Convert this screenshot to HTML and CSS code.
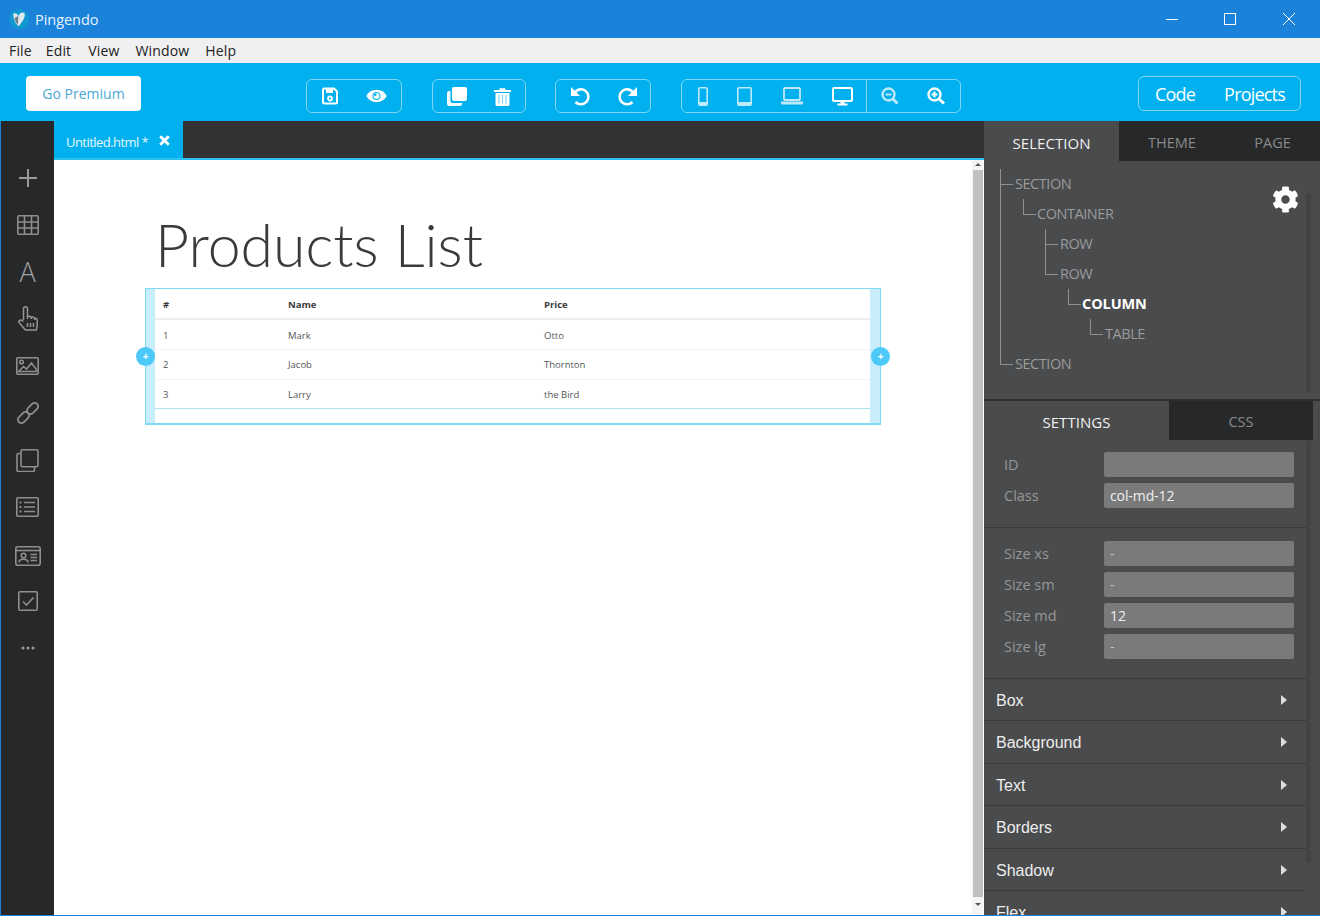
FILE: index.html
```html
<!DOCTYPE html>
<html lang="en">
<head>
<meta charset="utf-8">
<title>Pingendo</title>
<link rel="stylesheet" href="styles.css">
</head>
<body>
<div class="app">
  <header class="titlebar">
    <div class="brand">
      <svg class="logo" width="22" height="22" viewBox="0 0 22 22"><circle cx="11" cy="11" r="10" fill="#1098d0"/><path d="M5.500 5.500c2 -1 4 .5 5 2.500c.8 -2.500 3.500 -4.500 6 -3c1 3 -1 7 -3 9.500c-1 1.500 -2 3 -3 3.500c-2 -1 -3.500 -4 -4.500 -7c-.5 -2 -.8 -4 -.5 -5.500z" fill="#dfe9ee"/><path d="M10.500 8c-.5 3 -.5 6 -.5 9c-1.500 -1.500 -3 -4 -3.500 -7z" fill="#6d7f8c"/></svg>
      <span>Pingendo</span>
    </div>
    <div class="winctl">
      <svg class="winbtn" width="12" height="12" viewBox="0 0 12 12"><path d="M0 6.500h12" stroke="#fff" fill="none"/></svg>
      <svg class="winbtn" width="12" height="12" viewBox="0 0 12 12"><rect x=".5" y=".5" width="11" height="11" stroke="#fff" fill="none"/></svg>
      <svg class="winbtn winclose" width="12" height="12" viewBox="0 0 12 12"><path d="M0 0l12 12M12 0L0 12" stroke="#fff" fill="none"/></svg>
    </div>
  </header>

  <nav class="menubar">
    <span class="m-file">File</span><span class="m-edit">Edit</span><span class="m-view">View</span><span class="m-window">Window</span><span class="m-help">Help</span>
  </nav>

  <div class="toolbar">
    <button class="premium">Go Premium</button>
    <div class="tgroup g1">
      <svg class="ti i-save" width="16" height="18" viewBox="0 0 16 18"><path d="M2 1.500h10l3 3V15a1.500 1.500 0 0 1-1.500 1.500h-11A1.500 1.500 0 0 1 1 15V3a1.500 1.500 0 0 1 1-1.500z" fill="none" stroke="#fff" stroke-width="2"/><path d="M4 2h7v4H4z" fill="#fff"/><circle cx="8" cy="11.500" r="2" fill="none" stroke="#fff" stroke-width="1.800"/></svg>
      <svg class="ti i-eye" width="21" height="14" viewBox="0 0 21 14"><path d="M.3 7C2.500 3 6 .8 10.500.8S18.500 3 20.700 7c-2.200 4-5.700 6.200-10.200 6.200S2.500 11 .3 7z" fill="#fff"/><circle cx="10.500" cy="7" r="4" fill="#00b0ef"/><circle cx="10.500" cy="7" r="3" fill="#fff"/><circle cx="9.300" cy="5.800" r="1.300" fill="#00b0ef"/></svg>
    </div>
    <div class="tgroup g2">
      <svg class="ti i-copy" width="20" height="19" viewBox="0 0 20 19"><rect x="5" y="0" width="15" height="14" rx="2" fill="#fff"/><path d="M3.500 4v10a2 2 0 0 0 2 2H15v1a2 2 0 0 1-2 2H2a2 2 0 0 1-2-2V6a2 2 0 0 1 2-2z" fill="#fff" opacity=".95"/></svg>
      <svg class="ti i-trash" width="17" height="19" viewBox="0 0 17 19"><path d="M0 3h17v2H0zM5.500 1.200h6V3h-6z" fill="#fff"/><path d="M1.500 6h14v11.500a1.500 1.500 0 0 1-1.500 1.500H3a1.500 1.500 0 0 1-1.500-1.500z" fill="#fff"/><path d="M5 8v8.500M8.500 8v8.500M12 8v8.500" stroke="#7fd6f5" stroke-width="1.200"/></svg>
    </div>
    <div class="tgroup g3">
      <svg class="ti i-undo" width="19" height="19" viewBox="0 0 19 19"><path d="M4 5.200A7.500 7.500 0 1 1 4.500 15" fill="none" stroke="#fff" stroke-width="2.600"/><path d="M0 0v9h9z" fill="#fff"/></svg>
      <svg class="ti i-redo" width="19" height="19" viewBox="0 0 19 19"><path d="M15 5.200A7.500 7.500 0 1 0 14.500 15" fill="none" stroke="#fff" stroke-width="2.600"/><path d="M19 0v9h-9z" fill="#fff"/></svg>
    </div>
    <div class="tgroup g4">
      <div class="devices">
        <svg class="ti dim i-phone" width="10" height="19" viewBox="0 0 10 19"><rect x=".8" y=".8" width="8.400" height="17.400" rx="1.200" fill="none" stroke="#bfeafb" stroke-width="1.600"/><path d="M1 15h8v3H1z" fill="#bfeafb"/></svg>
        <svg class="ti dim i-tablet" width="15" height="19" viewBox="0 0 15 19"><rect x=".8" y=".8" width="13.400" height="17.400" rx="1.200" fill="none" stroke="#bfeafb" stroke-width="1.600"/><path d="M1 15h13v3H1z" fill="#bfeafb"/></svg>
        <svg class="ti dim i-laptop" width="22" height="18" viewBox="0 0 22 18"><rect x="3" y="1" width="16" height="12" rx="1" fill="none" stroke="#bfeafb" stroke-width="1.800"/><path d="M0 14.500h22v1.500a1.500 1.500 0 0 1-1.500 1.500h-19A1.500 1.500 0 0 1 0 16z" fill="#bfeafb"/></svg>
        <svg class="ti i-desktop" width="21" height="19" viewBox="0 0 21 19"><rect x="1" y="1" width="19" height="13" rx="1" fill="none" stroke="#fff" stroke-width="2"/><path d="M8.500 14h4v3h-4zM5.500 16.500h10V18.500h-10z" fill="#fff"/></svg>
      </div>
      <div class="zooms">
        <svg class="ti dim i-zout" width="18" height="18" viewBox="0 0 18 18"><circle cx="7.500" cy="7.500" r="6" fill="none" stroke="#bfeafb" stroke-width="2.400"/><path d="M4.500 7.500h6" stroke="#bfeafb" stroke-width="2"/><path d="M11.500 11.500l5 5" stroke="#bfeafb" stroke-width="3"/></svg>
        <svg class="ti i-zin" width="19" height="18" viewBox="0 0 19 18"><circle cx="7.500" cy="7.500" r="6" fill="none" stroke="#fff" stroke-width="2.400"/><path d="M4.500 7.500h6M7.500 4.500v6" stroke="#fff" stroke-width="2"/><path d="M11.500 11.500l5.500 5" stroke="#fff" stroke-width="3"/></svg>
      </div>
    </div>
    <div class="codegroup"><span>Code</span><span>Projects</span></div>
  </div>

  <main class="workspace">
    <aside class="sidebar">
      <div class="sb"><svg width="18" height="18" viewBox="0 0 18 18"><path d="M9 0v18M0 9h18" stroke="#999" stroke-width="2" fill="none"/></svg></div>
      <div class="sb"><svg width="22" height="20" viewBox="0 0 22 20" fill="none" stroke="#8d8e8f" stroke-width="1.600"><rect x=".8" y=".8" width="20.400" height="18.400" rx="1"/><path d="M.8 7h20.400M.8 13h20.400M7.500.8v18.400M14.500.8v18.400"/></svg></div>
      <div class="sb sb-a">A</div>
      <div class="sb"><svg width="20" height="25" viewBox="0 0 20 25" fill="none" stroke="#959697" stroke-width="1.500" stroke-linejoin="round"><path d="M5.500 14V2.800a2 2 0 0 1 4 0V10.500c1.800-.6 3.300-.2 3.800.8 1.500-.5 2.900 0 3.300 1 1.400-.3 2.600.5 2.600 2V19c0 2-.5 3.200-1 5H7.500L1.200 16.800c-1.100-1.500.8-3.500 2.500-2.500L5.500 15.500"/><path d="M9.500 10.500V13M13.300 11.300V13M16.600 12.300V14M9.500 17v4M12.500 17v4M15.500 17v4"/></svg></div>
      <div class="sb"><svg width="23" height="18" viewBox="0 0 23 18" fill="none" stroke="#8d8e8f" stroke-width="1.600"><rect x=".8" y=".8" width="21.400" height="16.400" rx="1"/><circle cx="5.500" cy="5" r="1.800"/><path d="M2.500 14.500l5-5 3 2.500 5-6 5 6.500v2z"/></svg></div>
      <div class="sb"><svg width="24" height="24" viewBox="0 0 24 24" fill="none" stroke="#8d8e8f" stroke-width="1.800"><rect x="-6.500" y="-3.500" width="13" height="7" rx="3.500" transform="translate(7.500 16.500) rotate(-45)"/><rect x="-6.500" y="-3.500" width="13" height="7" rx="3.500" transform="translate(16.500 7.500) rotate(-45)"/></svg></div>
      <div class="sb sb-down"><svg width="23" height="23" viewBox="0 0 23 23" fill="none" stroke="#8d8e8f" stroke-width="1.600"><rect x="5" y=".8" width="17" height="17" rx="1.500"/><path d="M5 4.500H2.500A1.500 1.500 0 0 0 1 6v15a1.500 1.500 0 0 0 1.500 1.500H17a1.500 1.500 0 0 0 1.500-1.500v-3"/></svg></div>
      <div class="sb"><svg width="23" height="20" viewBox="0 0 23 20" fill="none" stroke="#8d8e8f" stroke-width="1.600"><rect x=".8" y=".8" width="21.400" height="18.400" rx="1"/><path d="M8 5.500h11M8 10h11M8 14.500h11"/><path d="M3.500 5.500h2M3.500 10h2M3.500 14.500h2" stroke-width="2.200"/></svg></div>
      <div class="sb sb-card"><svg width="26" height="20" viewBox="0 0 26 20" fill="none" stroke="#8d8e8f" stroke-width="1.600"><rect x=".8" y=".8" width="24.400" height="18.400" rx="2"/><path d="M.8 4.500h24.400"/><circle cx="8.500" cy="9.500" r="2.300"/><path d="M4 16.500c0-2.500 2-3.300 4.500-3.300s4.500.8 4.500 3.300M15.500 8.500h6.500M15.500 11.500h6.500M15.500 14.500h6.500"/></svg></div>
      <div class="sb sb-check"><svg width="20" height="20" viewBox="0 0 20 20" fill="none" stroke="#8d8e8f" stroke-width="1.600"><rect x=".8" y=".8" width="18.400" height="18.400" rx="1"/><path d="M5 10.500l3.500 3.500 7-7.500" stroke-width="1.600"/></svg></div>
      <div class="sb"><svg width="14" height="4" viewBox="0 0 14 4" fill="#9a9b9c"><circle cx="2" cy="2" r="1.500"/><circle cx="7" cy="2" r="1.500"/><circle cx="12" cy="2" r="1.500"/></svg></div>
    </aside>

    <section class="center">
      <div class="tabbar">
        <div class="filetab">
          <span>Untitled.html *</span>
          <svg width="11" height="11" viewBox="0 0 11 11"><path d="M1.200 1.200l8.600 8.600M9.800 1.200l-8.600 8.600" stroke="#fff" stroke-width="2.800" fill="none"/></svg>
        </div>
      </div>
      <div class="viewport">
        <div class="canvas">
          <h1 class="title">Products List</h1>
          <div class="selbox">
            <table class="ptable">
              <thead><tr><th class="c1">#</th><th class="c2">Name</th><th>Price</th></tr></thead>
              <tbody>
                <tr><td>1</td><td>Mark</td><td>Otto</td></tr>
                <tr><td>2</td><td>Jacob</td><td>Thornton</td></tr>
                <tr><td>3</td><td>Larry</td><td>the Bird</td></tr>
              </tbody>
            </table>
            <span class="handle h-left">+</span>
            <span class="handle h-right">+</span>
          </div>
        </div>
        <div class="vscroll">
          <div class="arrow-up"></div>
          <div class="thumb"></div>
          <div class="arrow-down"></div>
        </div>
      </div>
    </section>

    <aside class="panel">
      <div class="ptabs">
        <div class="ptab on">SELECTION</div>
        <div class="ptab theme">THEME</div>
        <div class="ptab page">PAGE</div>
      </div>
      <div class="treewrap">
        <ul class="tree">
          <li class="n d0">SECTION</li>
          <li class="n d1">CONTAINER</li>
          <li class="n d2">ROW</li>
          <li class="n d2 tall">ROW</li>
          <li class="n d3 sel">COLUMN</li>
          <li class="n d4">TABLE</li>
          <li class="n d0 last">SECTION</li>
        </ul>
        <svg class="gear" width="27" height="27" viewBox="0 0 512 512"><path fill="#fff" d="M487.400 315.700l-42.600-24.600c4.300-23.200 4.300-47 0-70.200l42.600-24.600c4.900-2.800 7.100-8.600 5.500-14-11.100-35.600-30-67.800-54.700-94.600-3.800-4.100-10-5.100-14.800-2.300L380.800 110c-17.900-15.400-38.500-27.300-60.800-35.100V25.800c0-5.600-3.900-10.500-9.400-11.700-36.700-8.200-74.300-7.800-109.200 0-5.500 1.200-9.400 6.100-9.400 11.700V75c-22.200 7.900-42.800 19.800-60.800 35.100L88.700 85.500c-4.900-2.800-11-1.900-14.800 2.300-24.700 26.700-43.600 58.900-54.700 94.600-1.700 5.400.6 11.200 5.500 14L67.300 221c-4.300 23.200-4.300 47 0 70.200l-42.600 24.600c-4.900 2.800-7.100 8.600-5.500 14 11.100 35.600 30 67.800 54.700 94.600 3.800 4.100 10 5.100 14.800 2.300l42.600-24.600c17.900 15.400 38.500 27.300 60.800 35.100v49.200c0 5.600 3.900 10.500 9.400 11.700 36.700 8.200 74.300 7.800 109.200 0 5.500-1.200 9.400-6.100 9.400-11.700v-49.200c22.200-7.900 42.800-19.800 60.800-35.100l42.600 24.600c4.900 2.800 11 1.900 14.800-2.300 24.700-26.700 43.600-58.900 54.700-94.600 1.500-5.500-.7-11.300-5.600-14.100zM256 336c-44.100 0-80-35.900-80-80s35.900-80 80-80 80 35.900 80 80-35.900 80-80 80z"/></svg>
        <div class="track t1"></div>
      </div>
      <div class="stabs">
        <div class="stab on">SETTINGS</div>
        <div class="stab">CSS</div>
      </div>
      <div class="lower">
        <div class="props">
          <div class="fgroup first">
            <div class="frow"><label>ID</label><div class="inp"></div></div>
            <div class="frow"><label>Class</label><div class="inp">col-md-12</div></div>
          </div>
          <div class="fgroup second">
            <div class="frow"><label>Size xs</label><div class="inp faint">-</div></div>
            <div class="frow"><label>Size sm</label><div class="inp faint">-</div></div>
            <div class="frow"><label>Size md</label><div class="inp">12</div></div>
            <div class="frow"><label>Size lg</label><div class="inp faint">-</div></div>
          </div>
          <div class="acc">Box<i></i></div>
          <div class="acc">Background<i></i></div>
          <div class="acc">Text<i></i></div>
          <div class="acc">Borders<i></i></div>
          <div class="acc">Shadow<i></i></div>
          <div class="acc">Flex<i></i></div>
        </div>
        <div class="track t2"></div>
      </div>
    </aside>
  </main>
</div>
</body>
</html>
```
FILE: styles.css
```css
* { box-sizing: border-box; }
html, body { margin: 0; height: 100%; overflow: hidden; }
body { font-family: "Open Sans", "Liberation Sans", sans-serif; }
.app { width: 1320px; height: 916px; display: flex; flex-direction: column; background: #1a82d9; overflow: hidden; }

.titlebar { height: 38px; flex: none; background: #1a82d9; color: #fff; display: flex; align-items: center; justify-content: space-between; }
.brand { display: flex; align-items: center; font-size: 14.500px; letter-spacing: -.05px; color: #e8f3fc; }
.logo { margin-left: 8px; margin-right: 5px; }
.winctl { display: flex; align-items: center; padding-right: 25px; gap: 46px; }
.winclose { margin-left: 1px; }

.menubar { height: 25px; flex: none; background: #f0f0f2; color: #222; font-size: 14px; line-height: 25px; display: flex; letter-spacing: .15px; padding-left: 9px; }
.m-edit { margin-left: 14px; }
.m-view { margin-left: 17px; }
.m-window { margin-left: 16px; }
.m-help { margin-left: 16px; }

.toolbar { height: 58px; flex: none; background: #00b0ef; display: flex; align-items: flex-start; padding-left: 26px; }
button.premium { margin-top: 13px; width: 115px; height: 35px; background: #fff; border: 0; border-radius: 4px; color: #4aa9d8; font: 14px "Open Sans", sans-serif; padding: 0; }
.tgroup { margin-top: 16px; height: 34px; border: 1px solid #7fd6f5; border-radius: 6px; display: flex; align-items: center; justify-content: space-between; }
.g1 { margin-left: 165px; width: 96px; padding: 0 14px 0 15px; }
.g2 { margin-left: 30px; width: 94px; padding: 0 14px 0 14px; }
.g3 { margin-left: 29px; width: 96px; padding: 0 13px 0 15px; }
.g4 { margin-left: 30px; width: 280px; padding: 0; }
.devices { flex: none; width: 185px; height: 100%; border-right: 1px solid #7fd6f5; display: flex; align-items: center; padding: 0 13px 0 16px; justify-content: space-between; }
.zooms { flex: 1; height: 100%; display: flex; align-items: center; justify-content: space-between; padding: 0 14px; }
.ti { display: block; flex: none; }
.codegroup { margin-left: 177px; margin-top: 13px; width: 163px; height: 35px; border: 1px solid #7fd6f5; border-radius: 6px; display: flex; justify-content: space-between; align-items: center; padding: 0 15px 0 16px; color: #fff; font-size: 18px; letter-spacing: -.8px; }

.workspace { flex: 1; min-height: 0; display: flex; margin: 0 0 1px 1px; background: #272829; }

.sidebar { width: 53px; flex: none; background: #272829; padding-top: 33px; display: flex; flex-direction: column; }
.sb { height: 47px; flex: none; display: flex; align-items: center; justify-content: center; }
.sb-a { font-size: 27px; font-weight: 300; color: #a0a1a2; }
.sb-down { padding-top: 2px; }
.sb-card { padding-top: 4px; }
.sb-check { padding-top: 1px; }

.center { width: 930px; flex: none; display: flex; flex-direction: column; }
.tabbar { height: 37px; flex: none; background: #333334; }
.filetab { width: 129px; height: 37px; background: #00b0ef; color: #e6f7fd; font-size: 13px; letter-spacing: -.55px; display: flex; align-items: center; padding: 4px 0 0 12px; gap: 11px; }
.filetab svg { margin-top: -3px; }
.viewport { flex: 1; min-height: 0; display: flex; border-top: 2px solid #29c1f0; background: #fff; }
.canvas { flex: 1; min-width: 0; background: #fff; padding: 41px 0 0 91px; }
.title { margin: 0 0 0 10px; font-family: Lato, "Open Sans", sans-serif; font-size: 59px; line-height: 87px; font-weight: 300; color: #3a3a3a; }
.selbox { position: relative; width: 736px; height: 137px; border: 1px solid #7fdcf5; border-bottom-width: 2px; padding: 0 10px 0 9px; background: linear-gradient(90deg, #c9eefb 9px, #fff 9px, #fff calc(100% - 10px), #c9eefb calc(100% - 10px)); }
.ptable { width: 100%; border-collapse: collapse; font-size: 9.500px; color: #555; table-layout: fixed; border-bottom: 1px solid #aee2f2; }
.ptable th { font-weight: 700; text-align: left; height: 30px; padding: 1px 0 0 8px; color: #3c3c3c; border-bottom: 2px solid #eee; }
.ptable td { height: 30px; padding: 0 0 0 8px; border-top: 1px solid #f2f2f2; }
.ptable tr:first-child td { padding-top: 2px; }
.ptable tr:last-child td { height: 29px; padding-top: 1px; }
.ptable .c1 { width: 125px; }
.ptable .c2 { width: 256px; }
.handle { position: absolute; top: 58px; width: 19px; height: 19px; border-radius: 50%; background: #4cc9f8; color: #fff; font-size: 10px; font-weight: 700; line-height: 18px; text-align: center; }
.h-left { left: -10px; }
.h-right { right: -10px; }

.vscroll { width: 12px; flex: none; background: #f4f4f4; border-right: 1px solid #fff; display: flex; flex-direction: column; align-items: center; }
.thumb { width: 10px; height: 727px; background: #c1c1c1; margin-top: 4px; flex: none; }
.arrow-up { flex: none; margin-top: 3px; width: 0; height: 0; border: 3px solid transparent; border-bottom: 3px solid #555; border-top: 0; }
.arrow-down { flex: none; margin-top: 6px; width: 0; height: 0; border: 3px solid transparent; border-top: 3px solid #555; border-bottom: 0; }

.panel { flex: 1; min-width: 0; background: #4a4b4d; display: flex; flex-direction: column; overflow: hidden; }
.ptabs { height: 40px; flex: none; background: #272829; display: flex; }
.ptab { display: flex; align-items: center; justify-content: center; font-size: 14.500px; padding-top: 3px; color: #8a8b8c; }
.ptab.on { width: 135px; background: #4a4b4d; color: #f0f0f0; font-size: 15px; padding-top: 4px; letter-spacing: .05px; }
.ptab.theme { width: 106px; }
.ptab.page { width: 95px; }

.treewrap { position: relative; height: 240px; flex: none; display: flex; border-bottom: 2px solid #2e2f31; }
.tree { list-style: none; margin: 0; padding: 8px 0 0; flex: 1; font-size: 14.500px; letter-spacing: -.45px; color: #9a9b9c; }
.n { position: relative; height: 30px; line-height: 30px; white-space: nowrap; }
.n::before { content: ""; position: absolute; bottom: 14px; width: 12px; height: 15px; border-left: 1px solid #8f9091; border-bottom: 1px solid #8f9091; }
.d0 { padding-left: 31px; }
.d0::before { left: 16px; }
.d1 { padding-left: 53px; }
.d1::before { left: 39px; }
.d2 { padding-left: 76px; }
.d2::before { left: 61px; }
.d3 { padding-left: 98px; }
.d3::before { left: 84px; }
.d4 { padding-left: 121px; }
.d4::before { left: 106px; }
.tall::before { height: 30px; }
.last::before { height: 195px; }
.sel { color: #fff; font-weight: 700; letter-spacing: -.1px; }
.gear { position: absolute; left: 288px; top: 25px; }
.track { background: #424345; border-radius: 3px; width: 5px; flex: none; }
.t1 { margin: 32px 9px 6px 0; }
.t2 { margin: 0 9px 52px 0; }

.stabs { height: 39px; flex: none; display: flex; width: 329px; background: #272829; }
.stab { display: flex; align-items: center; justify-content: center; font-size: 14.500px; padding-top: 1px; color: #8a8b8c; width: 144px; }
.stab.on { width: 185px; background: #4a4b4d; color: #f0f0f0; font-size: 15px; padding-top: 3px; letter-spacing: .05px; }

.lower { flex: 1; min-height: 0; display: flex; }
.props { width: 322px; flex: none; }
.fgroup { border-bottom: 1px solid #3a3b3d; padding-left: 20px; }
.fgroup.first { height: 88px; padding-top: 12px; }
.fgroup.second { height: 151px; padding-top: 13px; }
.frow { height: 25px; display: flex; align-items: center; margin-bottom: 6px; }
label { width: 100px; flex: none; color: #959697; font-size: 14.500px; }
.inp { width: 190px; height: 25px; background: #7a7a7a; border-radius: 2px; color: #efefef; font-size: 14px; line-height: 25px; padding-left: 6px; letter-spacing: -.1px; }
.inp.faint { color: #c4c4c4; }
.acc { position: relative; height: 42.400px; border-bottom: 1px solid #3a3b3d; padding-left: 12px; font: 16px/43px "Liberation Sans", Arial, sans-serif; color: #eee; }
.acc i { position: absolute; left: 297px; top: 16px; width: 0; height: 0; border-left: 6px solid #ddd; border-top: 5px solid transparent; border-bottom: 5px solid transparent; }
```
